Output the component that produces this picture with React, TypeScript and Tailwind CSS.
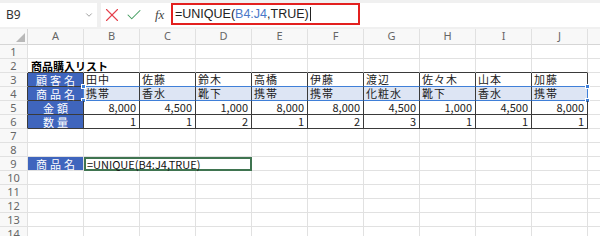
import { Check, ChevronDown, X } from "lucide-react";

const COLS = ["A", "B", "C", "D", "E", "F", "G", "H", "I", "J"];

const TABLE: (string | number)[][] = [
  ["顧客名", "田中", "佐藤", "鈴木", "高橋", "伊藤", "渡辺", "佐々木", "山本", "加藤"],
  ["商品名", "携帯", "香水", "靴下", "携帯", "携帯", "化粧水", "靴下", "香水", "携帯"],
  ["金額", 8000, 4500, 1000, 8000, 8000, 4500, 1000, 4500, 8000],
  ["数量", 1, 1, 2, 1, 2, 3, 1, 1, 1],
];

const ROWS = Array.from({ length: 14 }, (_, i) => i + 1);

const jp = { fontFamily: '"Noto Sans CJK JP", "Noto Sans", sans-serif' };
const ui = { fontFamily: '"Noto Sans", "Liberation Sans", sans-serif' };

// table occupies rows 3..6, columns A..J (1..10)
const inTable = (r: number, c: number) => r >= 3 && r <= 6 && c >= 1 && c <= 10;

function rightBorder(r: number, c: number) {
  if (r === 4 && (c === 1 || c === 10)) return "border-r-[#3f7fd8]";
  if (inTable(r, c) || inTable(r, c + 1)) return "border-r-[#3a3a3a]";
  return "border-r-[#e1e1e1]";
}

function bottomBorder(r: number, c: number) {
  if ((r === 3 || r === 4) && c >= 2 && c <= 10) return "border-b-[#3f7fd8]";
  if (inTable(r, c) || inTable(r + 1, c)) return "border-b-[#3a3a3a]";
  return "border-b-[#e1e1e1]";
}

function Handle({ pos }: { pos: string }) {
  return <span className={`absolute w-[5px] h-[5px] bg-[#3f7fd8] border border-white ${pos}`} />;
}

function HeaderCell({ text }: { text: string }) {
  return (
    <div
      className="h-full flex items-center justify-center bg-[#3f65bd] text-white text-[11px] tracking-[3px] pl-[3px] leading-[12px]"
      style={jp}
    >
      {text}
    </div>
  );
}

function DataCell({ r, c }: { r: number; c: number }) {
  const base = `relative h-[14px] border-r border-b ${rightBorder(r, c)} ${bottomBorder(r, c)}`;

  if (r === 2 && c === 1) {
    return (
      <div className={base}>
        <span className="absolute left-[3px] top-px whitespace-nowrap text-[11px] font-bold leading-[12px] text-black" style={jp}>
          商品購入リスト
        </span>
      </div>
    );
  }

  if (inTable(r, c)) {
    const value = TABLE[r - 3][c - 1];
    if (c === 1) {
      return (
        <div className={base}>
          <HeaderCell text={String(value)} />
        </div>
      );
    }
    const fill = r === 4 ? "bg-[#dde5f4]" : "";
    return (
      <div className={`${base} ${fill}`}>
        {typeof value === "number" ? (
          <div className="h-full text-right pr-[3px] text-[11px] leading-[12px] text-[#222]" style={jp}>
            {value.toLocaleString("en-US")}
          </div>
        ) : (
          <div className="h-full pl-[2px] text-[11px] tracking-[1px] leading-[12px] text-[#222] whitespace-nowrap" style={jp}>
            {value}
          </div>
        )}
        {r === 4 && c === 2 && (
          <>
            <Handle pos="-left-[3px] -top-[3px]" />
            <Handle pos="-left-[3px] -bottom-[3px]" />
          </>
        )}
        {r === 4 && c === 10 && (
          <>
            <Handle pos="-right-[3px] -top-[3px]" />
            <Handle pos="-right-[3px] -bottom-[3px]" />
          </>
        )}
      </div>
    );
  }

  if (r === 9 && c === 1) {
    return (
      <div className={base}>
        <HeaderCell text="商品名" />
      </div>
    );
  }

  return <div className={base} />;
}

function FormulaBar() {
  return (
    <div className="flex h-[29px] bg-[#f0f0f0] pt-[3px] pb-[2px] gap-[4px]">
      <div className="w-[97px] bg-white flex items-center justify-between pl-[6px] pr-[3px]">
        <span className="text-[12px] text-[#333]" style={ui}>B9</span>
        <ChevronDown size={10} strokeWidth={1.5} className="text-[#666]" />
      </div>
      <div className="flex-1 bg-white flex items-center">
        <div className="flex items-center w-[70px] gap-[2px]">
          <X size={22} strokeWidth={1.2} className="text-[#e5404c]" />
          <Check size={18} strokeWidth={1.4} className="text-[#3f9a5c]" />
          <span className="ml-[10px] text-[13px] italic text-[#444]" style={{ fontFamily: '"Liberation Serif", serif' }}>
            fx
          </span>
        </div>
        <div className="w-[189px] h-[22px] -mt-[2px] border-2 border-[#e3201f] flex items-center pl-[2px]">
          <span className="text-[12.5px] text-[#222] whitespace-nowrap" style={{ fontFamily: '"Liberation Sans", sans-serif' }}>
            =UNIQUE(<span className="text-[#4a78c8]">B4:J4</span>,TRUE)
          </span>
          <span className="w-px h-[14px] bg-[#222] ml-px" />
        </div>
      </div>
    </div>
  );
}

export default function App() {
  return (
    <div className="w-[600px] h-[236px] overflow-hidden bg-white">
      <FormulaBar />
      <div className="grid grid-cols-[28px_repeat(10,56px)_1fr]">
        {/* column header row */}
        <div className="relative h-[16px] bg-[#f8f8f8] border-r border-b border-r-[#d6d6d6] border-b-[#d6d6d6]">
          <svg className="absolute right-[2px] bottom-[2px]" width="9" height="9" viewBox="0 0 9 9">
            <polygon points="9,0 9,9 0,9" fill="#b8b8b8" />
          </svg>
        </div>
        {COLS.map((col) => (
          <div
            key={col}
            className="h-[16px] bg-[#f8f8f8] border-r border-b border-r-[#e1e1e1] border-b-[#d6d6d6] flex items-center justify-center text-[11px] text-[#666]"
            style={ui}
          >
            {col}
          </div>
        ))}
        <div className="h-[16px] bg-[#f8f8f8] border-b border-b-[#d6d6d6]" />

        {ROWS.map((r) => (
          <div key={r} className="contents">
            <div
              className={`h-[14px] bg-[#f8f8f8] border-r border-b ${rightBorder(r, 0)} border-b-[#e1e1e1] flex items-center justify-center text-[11px] text-[#666] leading-none`}
              style={ui}
            >
              {r}
            </div>
            {r === 9 ? (
              <>
                <DataCell r={9} c={1} />
                <div className="col-span-3 h-[14px] border-2 border-[#3f7450] bg-white pl-[1px] flex items-center">
                  <span className="text-[11px] text-[#111] leading-none whitespace-nowrap" style={jp}>
                    =UNIQUE(B4:J4,TRUE)
                  </span>
                </div>
                {[5, 6, 7, 8, 9, 10].map((c) => (
                  <DataCell key={c} r={r} c={c} />
                ))}
              </>
            ) : (
              COLS.map((_, i) => <DataCell key={i} r={r} c={i + 1} />)
            )}
            <div className="h-[14px] border-b border-b-[#e1e1e1]" />
          </div>
        ))}
      </div>
    </div>
  );
}
